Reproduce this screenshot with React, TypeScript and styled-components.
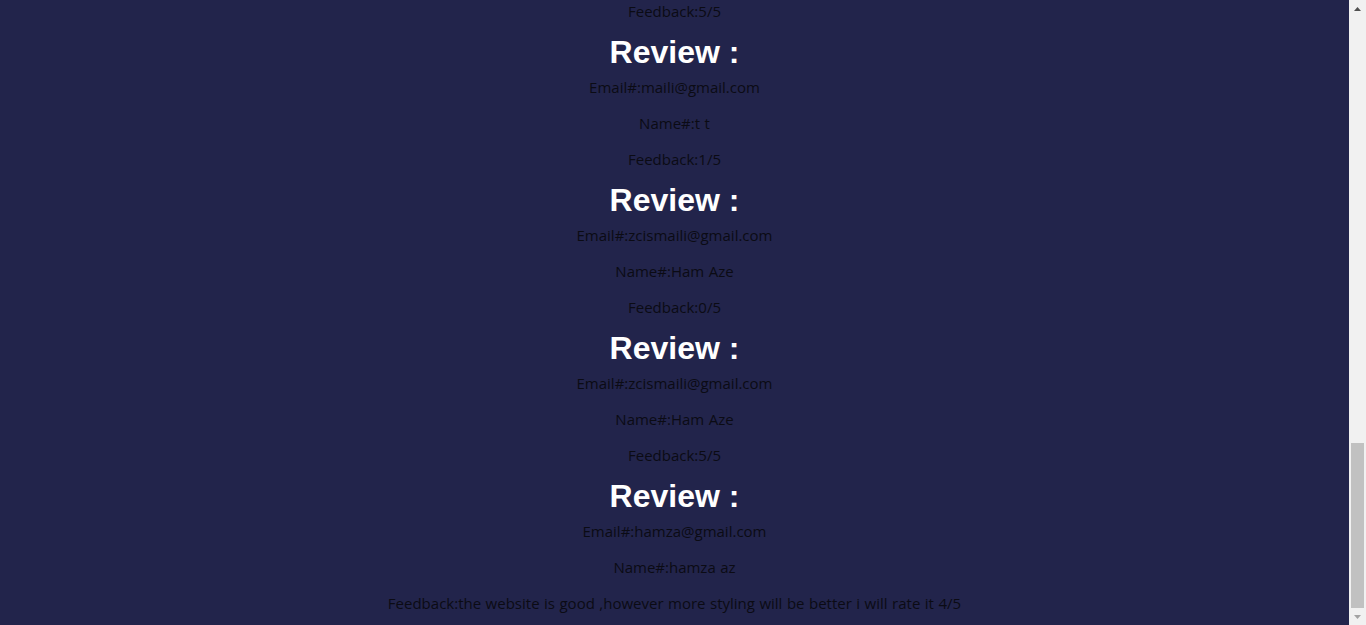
import React from "react";
import styled, { createGlobalStyle } from "styled-components";

const GlobalStyle = createGlobalStyle`
  html, body {
    margin: 0;
    padding: 0;
    background: #22244b;
    overflow: hidden;
  }
`;

const Page = styled.div`
  display: flex;
  height: 625px;
  background: #22244b;
`;

const List = styled.main`
  flex: 1;
  min-width: 0;
  text-align: center;
  padding-top: 1px;
`;

const Review = styled.section`
  display: block;
`;

const Title = styled.h1`
  margin: 13px 0 6px;
  font-family: "Liberation Sans", Arial, sans-serif;
  font-size: 32px;
  font-weight: 700;
  line-height: 37px;
  color: #ffffff;
`;

const Line = styled.p`
  margin: 0;
  font-family: "Open Sans", "Noto Sans", sans-serif;
  font-size: 15px;
  line-height: 20px;
  word-spacing: 0.6px;
  color: #0b0b14;

  & + & {
    margin-top: 16px;
  }
`;

const Scrollbar = styled.div`
  width: 17px;
  flex: none;
  display: flex;
  flex-direction: column;
  background: #f1f1f1;
`;

const ArrowButton = styled.div`
  height: 17px;
  flex: none;
  display: flex;
  align-items: center;
  justify-content: center;
`;

const Track = styled.div`
  flex: 1;
  display: flex;
  flex-direction: column;
  justify-content: flex-end;
  padding: 0 2px;
`;

const Thumb = styled.div`
  height: 165px;
  background: #c1c1c1;
`;

type Item = { email: string; name: string; feedback: string };

const reviews: Item[] = [
  { email: "maili@gmail.com", name: "t t", feedback: "1/5" },
  { email: "zcismaili@gmail.com", name: "Ham Aze", feedback: "0/5" },
  { email: "zcismaili@gmail.com", name: "Ham Aze", feedback: "5/5" },
  {
    email: "hamza@gmail.com",
    name: "hamza az",
    feedback: "the website is good ,however more styling will be better i will rate it 4/5",
  },
];

export default function App() {
  return (
    <>
      <GlobalStyle />
      <Page>
        <List>
          <Line>Feedback:5/5</Line>
          {reviews.map((r, i) => (
            <Review key={i}>
              <Title>Review :</Title>
              <Line>Email#:{r.email}</Line>
              <Line>Name#:{r.name}</Line>
              <Line>Feedback:{r.feedback}</Line>
            </Review>
          ))}
        </List>
        <Scrollbar>
          <ArrowButton>
            <svg width="7" height="4" viewBox="0 0 7 4">
              <path d="M3.5 0 L7 4 L0 4 Z" fill="#505050" />
            </svg>
          </ArrowButton>
          <Track>
            <Thumb />
          </Track>
          <ArrowButton>
            <svg width="7" height="4" viewBox="0 0 7 4">
              <path d="M0 0 L7 0 L3.5 4 Z" fill="#a3a3a3" />
            </svg>
          </ArrowButton>
        </Scrollbar>
      </Page>
    </>
  );
}
